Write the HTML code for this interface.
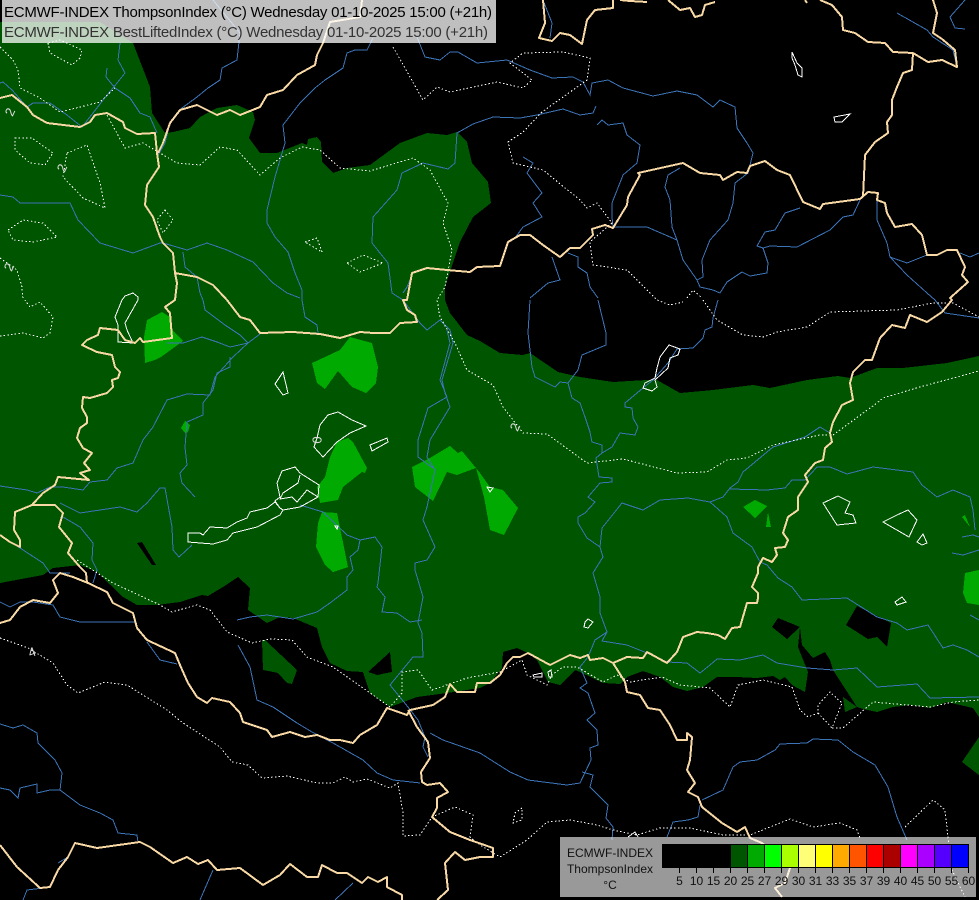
<!DOCTYPE html>
<html><head><meta charset="utf-8"><style>
html,body{margin:0;padding:0;background:#000;width:979px;height:900px;overflow:hidden}
svg{display:block}
text{font-family:"Liberation Sans",sans-serif}
</style></head><body>
<svg width="979" height="900" viewBox="0 0 979 900" xmlns="http://www.w3.org/2000/svg" shape-rendering="crispEdges">
<rect width="979" height="900" fill="#000"/>
<g>
<polygon fill="#005500" points="0,22 100,22 133,43 150,87 152,113 165,133 173,132 190,128 200,117 217,108 237,105 253,112 255,120 249,138 260,153 277,153 302,143 307,145 308,139 317,137 321,142 322,162 333,173 347,168 370,165 400,143 427,133 447,135 457,132 467,142 472,163 488,182 491,203 473,217 460,242 445,287 445,300 450,313 467,335 480,341 500,353 523,355 530,353 558,372 580,377 613,382 647,380 657,380 680,393 713,390 753,385 770,388 807,380 838,376 850,378 877,368 903,368 947,363 979,356 979,717 973,708 947,702 930,708 910,705 893,707 877,712 863,709 857,707 833,670 808,672 805,692 792,685 785,677 780,680 773,676 757,678 737,677 717,677 703,687 687,691 673,687 660,677 643,671 627,677 620,684 603,683 580,672 575,670 560,685 548,682 537,660 528,653 517,648 503,652 502,668 490,683 480,688 447,693 417,697 390,707 370,693 363,672 347,671 330,663 322,647 317,628 293,618 280,617 267,623 248,610 250,588 238,577 223,587 208,596 202,595 180,602 157,605 137,605 123,597 97,572 80,565 53,568 43,575 0,583"/>
<polygon fill="#005500" points="843,697 857,707 845,712"/>
<polygon fill="#000" points="800,627 802,645 813,658 825,652 830,660 833,670 808,672 798,647"/>
<polygon fill="#000" points="772,627 778,618 800,627 787,639"/>
<polygon fill="#000" points="857,606 891,623 887,647 877,637 868,639 846,625"/>
<polygon fill="#000" points="137,543 142,542 156,565 152,565"/>
<polygon fill="#000" points="368,672 390,652 392,672 377,675"/>
<polygon fill="#005500" points="262,640 265,640 297,670 292,684 287,683 278,673 263,670"/>
<polygon fill="#005500" points="979,737 962,762 979,775"/>
<g fill="#00aa00">
<polygon points="147,320 162,312 170,317 172,330 183,341 161,357 155,360 145,363 144,337"/>
<polygon points="312,363 340,350 350,337 372,343 378,367 376,383 366,393 352,387 338,371 325,389 317,383"/>
<polygon points="348,438 353,442 367,468 365,473 362,472 343,487 338,500 320,503 317,487 325,477 330,457 337,442"/>
<polygon points="322,512 337,513 348,567 333,572 325,565 316,547 318,523"/>
<polygon points="412,467 430,458 450,446 458,453 462,451 476,468 457,475 447,472 433,501 415,487"/>
<polygon points="476,468 480,473 490,487 503,490 518,508 504,535 490,530 484,497"/>
<polygon points="185,421 190,425 188,432 185,433 181,428"/>
<polygon points="743,507 755,500 767,506 755,518"/>
<polygon points="768,512 771,527 766,527"/>
<polygon points="962,517 965,515 970,527"/>
<polygon points="965,573 979,570 979,605 967,603 963,593"/>
</g>
</g>
<g fill="none" stroke="#3c74b8" stroke-width="1">
<polyline points="213,0 240,33 237,60 222,68 220,80 208,88 197,97 182,108 170,123 165,143 157,157"/>
<polyline points="120,43 118,60 125,73 113,88 107,95 93,113 82,127 67,115 50,103 33,103 27,107 12,90 3,82 0,83"/>
<polyline points="107,68 106,77 115,88 130,98 140,113 150,117 157,133"/>
<polyline points="373,38 367,50 355,50 347,53 343,68 325,80 315,88 300,103 283,125 285,143 275,177 267,210 267,223 275,237 288,252 295,273 302,290 302,300 305,317 317,325 318,333"/>
<polyline points="417,37 425,57 440,60 450,52 458,52 477,63 507,60 530,70 552,78 573,77 583,82 590,95 592,83 608,80 623,88 653,96 677,91 697,95 713,107 720,100 735,107 737,128 747,143 753,153 748,173 735,183 733,203 728,220 710,240 702,260 703,277 697,280"/>
<polyline points="596,106 593,113 580,115 563,109 537,115 520,118 493,117 473,124 457,133 455,163 448,169 423,163 402,173 397,190 373,217 372,243 388,263 392,293 403,300 420,323 427,330 440,320 450,330 453,343 442,380 445,393 450,407 430,440 427,457 435,470 427,507 423,520 435,547 427,560 415,563 415,570 423,597 418,623 422,633 423,657 413,657 390,685 408,707 418,720 425,737 423,747 428,757"/>
<polyline points="447,330 450,343 440,380 447,397 428,408 418,440 418,457 433,468"/>
<polyline points="0,195 13,197 20,203 70,203 78,220 100,243 133,253 160,243 163,243 187,250 207,243 227,250 253,262 273,283 287,293 300,298"/>
<polyline points="183,252 185,267 197,277 200,293 203,300 205,310 225,325 240,335 248,343"/>
<polyline points="413,273 407,287 403,293"/>
<polyline points="0,486 27,490 37,493 50,487 63,487 83,490 90,482 107,480 117,468 133,463 143,440 153,427 167,400 187,394 210,395 215,377 233,357 248,343 260,334"/>
<polyline points="167,343 183,343 202,337 217,342 230,347 248,343"/>
<polyline points="230,357 230,367 217,373 213,390 203,403 203,415 187,422 185,447 187,465 180,473 182,483 195,497"/>
<polyline points="60,503 80,513 120,507 137,512 147,503 160,488 165,488 172,527 173,550 179,557 192,545"/>
<polyline points="63,517 80,527 93,543 92,560 97,570 93,583"/>
<polyline points="0,535 20,548 43,563 50,573 70,573"/>
<polyline points="300,505 323,512 347,535 360,540 375,537 382,547 378,583 377,587 385,597 382,612 397,613 410,622 422,620"/>
<polyline points="360,540 358,550 350,557 353,570 347,577 347,590 330,603 317,612 293,619 267,615 250,617 237,620"/>
<polyline points="530,300 528,333 532,367 535,377 555,387 560,382 568,383"/>
<polyline points="598,300 606,333 606,345 582,355 578,370 568,383 572,398 580,403 585,417 590,432 592,442 602,445 602,453 596,458 599,477 612,478 612,482 600,483 588,497 595,502 585,513 578,517 578,523 587,538 600,547 603,557 593,573 600,597 600,613 607,632 595,640 588,657 580,667 587,683 580,688 588,693 595,713 587,720 597,730 598,745 590,748 591,760 580,783 567,785 528,780 510,772 480,753 443,740 430,733"/>
<polyline points="718,300 713,318 712,327 705,330 703,338 693,348 677,349 668,363 653,380 643,388 625,403 625,407 632,408 633,418 638,427 635,435 620,433 612,447 602,453"/>
<polyline points="600,547 602,528 622,503 643,510 660,500 688,498 710,502 723,497 730,488 738,482 743,472 773,447 805,437 820,427 830,433"/>
<polyline points="730,489 767,490 785,488 792,480 805,480 817,467 830,467 847,474 873,467 913,472 922,485 937,497 953,490 970,497 973,510 975,530"/>
<polyline points="710,502 727,517 733,533 752,547 760,562 767,565 778,578 792,587 802,600 847,598 877,617 897,623 907,630 928,625 943,648 953,645 967,650 979,657"/>
<polyline points="595,640 607,632 602,641 627,645 647,653 667,662 687,663 700,673 710,665 717,659 740,660 763,655 777,663 807,668 833,670 857,668 877,687 917,684 930,698 979,697"/>
<polyline points="333,743 363,760 377,773 393,780 420,783"/>
<polyline points="238,645 250,667 257,700 273,707 297,723 312,732 333,743"/>
<polyline points="147,642 160,660 177,664"/>
<polyline points="0,602 10,607 20,602 33,602 53,605 60,617 80,622 113,622 135,622"/>
<polyline points="0,724 13,728 23,725 37,733 38,743 55,760 62,773 60,790 80,805 100,813 113,820 118,833 137,835 138,842"/>
<polyline points="0,788 10,790 18,798 20,788 37,784 37,793 50,790 60,790"/>
<polyline points="23,900 27,890 43,888"/>
<polyline points="58,863 68,857"/>
<polyline points="200,900 213,870"/>
<polyline points="335,900 353,883"/>
<polyline points="702,800 723,790 733,767 740,762 757,760 775,750 780,744 807,743 813,739 838,740 853,752 875,765 888,787 897,817 907,840"/>
<polyline points="700,805 698,817 688,820 673,822 667,837"/>
<polyline points="582,772 593,775 590,787 608,805 606,818 613,827 612,840"/>
<polyline points="970,615 979,620"/>
<polyline points="952,553 963,555 979,550"/>
<polyline points="962,537 973,535 979,537"/>
<polyline points="523,157 533,163 527,173 542,193 533,203 542,217 523,227 515,238"/>
<polyline points="597,125 602,120 608,125 623,123 627,135 640,145 637,163 623,175 612,203 612,217 613,227 647,227 677,240 672,227 670,200 665,187 668,175 680,168"/>
<polyline points="677,240 683,260 697,280 700,287 713,290 720,293 727,282 742,272 750,276 767,273 768,263 763,248 757,246 765,232 775,230 785,213 800,208"/>
<polyline points="763,248 770,246 797,247 830,230 843,217 853,215 860,200"/>
<polyline points="877,200 877,220 887,243 890,257 907,263 927,255"/>
<polyline points="890,257 907,275 927,293 935,300 945,313 979,318"/>
<polyline points="960,253 970,257 979,253"/>
<polyline points="552,257 560,280 548,283 530,298"/>
<polyline points="568,253 578,257 578,267 587,273 590,287 598,298"/>
<polyline points="543,0 552,23 550,38"/>
<polyline points="897,13 927,30 933,37 953,50 957,67"/>
<polyline points="965,0 950,17 955,28 965,29"/>
</g>
<g fill="none" stroke="#fff" stroke-width="1" stroke-dasharray="1.5 2.2">
<polygon points="48,43 50,53 72,65 80,58 82,50 60,40"/>
<polyline points="0,47 13,60 18,70 20,88 40,98 60,112 100,102 115,88"/>
<polyline points="107,115 125,148 143,143 177,163 200,165 220,147 237,150 260,175 280,158 302,147 320,150 340,168 370,171 413,158 430,170 448,203 443,223 452,250 445,287 437,300 440,317 455,343 467,370 493,385 503,407 523,433 547,434 587,463 623,459 677,473 707,472 727,460 747,458 773,445 820,435 833,435 877,403 883,398 920,387 979,371"/>
<polygon points="15,138 32,138 53,153 45,165 30,163 15,150"/>
<polygon points="67,153 87,145 100,183 105,208 83,198 63,177"/>
<polygon points="8,230 23,220 43,223 57,237 33,242 13,240"/>
<polygon points="165,210 173,220 163,233 157,220"/>
<polygon points="305,242 317,238 322,252"/>
<polygon points="347,263 363,255 383,263 360,272"/>
<polyline points="0,258 17,270 22,287 23,300"/>
<polyline points="0,336 23,333 43,338 50,333 53,317 40,302 30,307 25,300"/>
<polyline points="393,47 405,68 423,100 437,87 450,92 497,82 523,88 532,80 510,63 523,53 563,52 590,58 587,80 542,112 523,132 508,142 513,163 543,170 580,200 587,208 597,203 612,223 590,242 593,265 627,270 657,300 670,305 683,302"/>
<polyline points="687,298 693,290 702,298"/>
<polyline points="703,300 717,320 743,335 763,337 777,332 807,327 830,312 897,310 933,303 953,303 979,317"/>
<polyline points="77,560 113,583 160,605 172,612 197,605 210,610 227,632 252,643 270,639 292,640 307,657 333,667 390,707 402,693 402,672 418,670 432,690 467,678 500,672 522,660 527,675 547,685 552,675 563,667 577,667 603,682 617,675 630,682 662,677 680,685 710,688 730,707 738,685 763,680 792,687 800,710 808,717 818,713 818,705 830,692 842,703 832,728 843,728 873,702 907,705 930,707 953,702 979,700"/>
<polyline points="818,713 832,728"/>
<polyline points="0,638 28,648 53,663 67,685 78,693 105,682 127,685 167,710 183,723 220,747 232,762 248,765 262,778 287,776 317,783 333,783 345,777 353,782 367,779 390,788 398,783 403,813 403,836 420,835 432,817 455,807 473,815 470,837 480,845 500,857 527,840 547,822 570,820 597,825 613,830 637,835 660,828 690,828 723,835 750,835 790,819 813,827 840,823 857,830 860,838"/>
<polygon points="522,808 515,813 513,823 522,820"/>
<polyline points="905,827 933,800 945,810 948,837 952,870 965,897"/>
</g>
<g fill="none" stroke="#fff" stroke-width="1">
<polyline points="122,300 115,317 118,325 118,342 133,343 127,330 125,323 138,300 138,297 133,293 125,296 122,300"/>
<polygon points="283,372 275,384 283,395 288,393"/>
<polygon points="338,412 328,415 320,425 317,438 314,447 323,457 337,442 350,433 366,426 352,420"/>
<polygon points="370,445 387,438 388,442 372,451"/>
<polygon points="188,533 200,533 203,535 210,527 227,528 237,522 247,518 250,512 267,508 275,502 280,508 283,510 300,507 318,497 319,485 300,473 295,467 282,471 277,483 280,497 275,501 280,508 283,510 280,515 257,527 233,533 227,540 213,544 188,542"/>
<polyline points="300,475 298,483 283,493 280,499 292,497 297,502 307,490 318,497"/>
<polygon points="487,487 493,488 490,492"/>
<polygon points="335,526 338,526 337,529"/>
<polygon points="823,503 838,496 850,502 845,513 853,515 856,523 837,525"/>
<polygon points="883,522 897,515 908,510 917,520 909,537"/>
<polygon points="917,542 923,534 927,543 922,545"/>
<polygon points="669,345 680,349 678,355 670,358 668,368 655,380 657,387 652,391 643,388 645,383 655,378 657,368 660,357"/>
<polygon points="792,52 797,63 802,68 802,77 798,75 795,65 792,58"/>
<polygon points="834,117 850,114 842,122 835,122"/>
<polygon points="895,602 902,597 906,602 897,605"/>
<polygon points="585,622 588,619 593,622 588,628 584,627"/>
<polygon points="533,675 542,673 542,677 534,677"/>
<polygon points="548,672 551,670 552,677 549,677"/>
<polyline points="628,837 635,832 638,837"/>
</g>
<g fill="none" stroke="#f8d8a4" stroke-width="2" stroke-linejoin="round">
<polyline points="0,98 12,95 27,107 33,115 47,123 80,127 90,122 95,115 107,113 123,122 125,128 137,134 155,133 157,153 159,167 147,185 145,205 153,217 160,237 163,243 173,253 175,273 197,277 213,285 227,300 240,317 250,320 260,333 293,332 320,334 340,338 360,332 373,333 390,333 400,323 417,322 415,315 407,310 403,300 407,300 412,273 427,268 447,270 470,272 477,267 500,266 508,242 520,235 530,235 543,245 560,257 570,248 580,248 593,235 592,229 605,225 613,228 627,205 628,197 640,175 638,173 683,163 700,173 720,175 723,180 737,172 747,173 750,166 765,161 777,170 790,175 803,202 820,209 823,204 860,199 868,192 878,193 877,200 885,203 887,213 895,227 912,224 922,235 927,255 937,255 947,250 957,250 965,267 962,275 968,282 950,298 952,300 942,312 927,322 910,315 905,328 892,325 880,338 872,360 865,360 853,372 850,383 853,400 842,405 833,422 830,433 832,442 825,448 823,460 815,463 805,475 808,482 798,497 798,510 788,517 783,533 788,540 785,547 775,548 777,555 772,562 763,558 758,567 758,573 752,587 758,593 758,598 757,603 747,603 740,627 732,628 725,639 718,635 707,633 697,632 683,637 677,652 667,663 647,652 643,658 627,657 613,663 603,658 590,660 588,655 580,658 570,655 550,665 528,653 520,657 513,657 507,663 500,675 490,683 477,683 475,692 457,692 450,684 445,697 433,705 410,710 407,715 387,708 377,725 360,735 353,743 340,740 330,740 317,735 305,737 290,732 272,737 267,730 243,722 240,713 230,702 212,698 207,703 197,697 188,683 180,665 175,653 147,640 137,628 133,613 113,603 107,592 88,583 73,577 60,573 53,580 58,593 50,603 33,600 20,607 10,620 0,623"/>
<polyline points="175,273 177,283 175,300 165,307 170,313 172,338 143,342 140,338 135,343 125,340 118,330 100,328 98,335 87,340 82,345 97,352 112,355 115,367 120,372 118,378 112,380 113,387 107,393 90,398 83,397 82,408 87,417 87,423 80,428 77,438 83,448 92,453 84,463 90,470 80,473 89,480 58,477 55,485 43,493 32,505 15,512 14,530 20,540 20,547 10,542 0,535"/>
<polyline points="32,505 55,505 63,513 59,527 72,543 68,553 80,567 86,573 87,583"/>
<polyline points="362,0 360,17 330,22 323,43 317,55 315,65 297,75 283,90 267,95 260,107 240,115 230,110 217,115 197,105 180,110 170,123 163,143 158,153"/>
<polyline points="543,0 545,23 539,38 552,41 560,33 570,35 582,44 587,20 595,10 613,8 613,0"/>
<polyline points="620,0 630,1 647,2"/>
<polyline points="668,0 680,10 690,8 695,17 702,15 705,5 715,2"/>
<polyline points="820,0 832,5 842,17 843,30 855,33 868,42 885,43 893,52 913,53 928,62 942,60 957,67 955,50 942,39 933,33 937,13 933,0"/>
<polyline points="913,53 912,70 903,73 897,87 892,100 892,115 887,122 888,133 875,142 865,155 863,197"/>
<polyline points="805,0 807,3"/>
<polyline points="0,845 17,867 40,888 50,887 58,870 68,857 75,843 97,848 140,842 150,847 173,863 187,857 198,864 208,860 217,870 240,868 263,885 280,875 290,864 307,877 318,877 322,865 337,873 347,873 362,883 368,877 378,882 387,877 387,887 402,895 402,900"/>
<polyline points="437,900 448,890 445,863 455,852 465,860 480,857 493,857 493,848 470,840 450,832 432,817 437,808 437,798 448,792 440,783 427,785 422,782 421,772 430,758 428,742 417,727 408,710"/>
<polyline points="613,663 625,682 627,692 640,695 648,708 660,710 670,725 677,740 687,740 687,733 692,737 690,760 687,770 695,783 688,792 698,797 702,807 722,823 737,832 745,827 750,838 762,843 790,868 785,883 775,888 782,897"/>
</g>
<g fill="#dcdcdc" font-size="13" text-anchor="middle">
<text x="0" y="4.5" transform="translate(10,112) rotate(-65)">2</text>
<text x="0" y="4.5" transform="translate(62,168) rotate(-65)">2</text>
<text x="0" y="4.5" transform="translate(9,267) rotate(-65)">2</text>
<text x="0" y="4.5" transform="translate(515,427) rotate(-65)">2</text>
<text x="0" y="4.5" transform="translate(32,652) rotate(-20)">4</text>
<text x="0" y="4.5" transform="translate(317,440) rotate(-88)">0</text>
</g>
<rect x="2" y="0" width="494" height="43" fill="#fff" fill-opacity="0.75"/>
<text x="4" y="17" font-size="15" fill="#000" textLength="488" lengthAdjust="spacing">ECMWF-INDEX ThompsonIndex (°C) Wednesday 01-10-2025 15:00 (+21h)</text>
<text x="4" y="37" font-size="15" fill="#333" textLength="484" lengthAdjust="spacing">ECMWF-INDEX BestLiftedIndex (°C) Wednesday 01-10-2025 15:00 (+21h)</text>
<rect x="560" y="837" width="416" height="60" fill="#fff" fill-opacity="0.6"/>
<g stroke="#000" stroke-width="1">
<rect x="662.5" y="844.5" width="17" height="23" fill="#000"/>
<rect x="679.5" y="844.5" width="17" height="23" fill="#000"/>
<rect x="696.5" y="844.5" width="17" height="23" fill="#000"/>
<rect x="713.5" y="844.5" width="17" height="23" fill="#000"/>
<rect x="730.5" y="844.5" width="17" height="23" fill="#005500"/>
<rect x="747.5" y="844.5" width="17" height="23" fill="#00aa00"/>
<rect x="764.5" y="844.5" width="17" height="23" fill="#00ff00"/>
<rect x="781.5" y="844.5" width="17" height="23" fill="#aaff00"/>
<rect x="798.5" y="844.5" width="17" height="23" fill="#ffff77"/>
<rect x="815.5" y="844.5" width="17" height="23" fill="#ffff00"/>
<rect x="832.5" y="844.5" width="17" height="23" fill="#ffaa00"/>
<rect x="849.5" y="844.5" width="17" height="23" fill="#ff5500"/>
<rect x="866.5" y="844.5" width="17" height="23" fill="#ff0000"/>
<rect x="883.5" y="844.5" width="17" height="23" fill="#aa0000"/>
<rect x="900.5" y="844.5" width="17" height="23" fill="#ff00ff"/>
<rect x="917.5" y="844.5" width="17" height="23" fill="#aa00ff"/>
<rect x="934.5" y="844.5" width="17" height="23" fill="#5500ff"/>
<rect x="951.5" y="844.5" width="17" height="23" fill="#0000ff"/>
<path fill="none" d="M679.5 867V873M696.5 867V873M713.5 867V873M730.5 867V873M747.5 867V873M764.5 867V873M781.5 867V873M798.5 867V873M815.5 867V873M832.5 867V873M849.5 867V873M866.5 867V873M883.5 867V873M900.5 867V873M917.5 867V873M934.5 867V873M951.5 867V873M968.5 867V873"/>
</g>
<g font-size="12" fill="#111" text-anchor="middle">
<text x="610" y="857">ECMWF-INDEX</text>
<text x="610" y="873">ThompsonIndex</text>
<text x="610" y="889">°C</text>
<text x="679.5" y="885">5</text><text x="696.5" y="885">10</text><text x="713.5" y="885">15</text><text x="730.5" y="885">20</text><text x="747.5" y="885">25</text><text x="764.5" y="885">27</text><text x="781.5" y="885">29</text><text x="798.5" y="885">30</text><text x="815.5" y="885">31</text><text x="832.5" y="885">33</text><text x="849.5" y="885">35</text><text x="866.5" y="885">37</text><text x="883.5" y="885">39</text><text x="900.5" y="885">40</text><text x="917.5" y="885">45</text><text x="934.5" y="885">50</text><text x="951.5" y="885">55</text><text x="968.5" y="885">60</text>
</g>
</svg>
</body></html>
